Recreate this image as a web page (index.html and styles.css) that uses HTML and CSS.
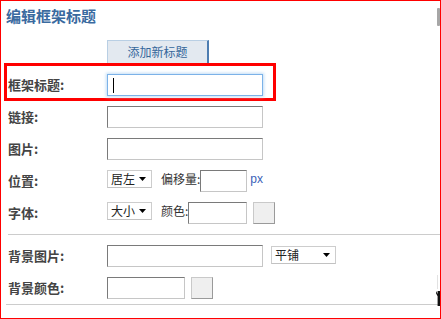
FILE: index.html
```html
<!DOCTYPE html>
<html lang="zh-CN">
<head>
<meta charset="utf-8">
<title>编辑框架标题</title>
<link rel="stylesheet" href="styles.css">
</head>
<body>
<div class="panel">
  <h1 class="title">编辑框架标题</h1>
  <div class="tabs"><div class="tab">添加新标题</div></div>

  <div class="row highlight">
    <div class="label">框架标题:</div>
    <div class="input focus w156"><span class="caret"></span></div>
  </div>

  <div class="rows">
    <div class="row">
      <div class="label">链接:</div>
      <div class="input w156"></div>
    </div>
    <div class="row">
      <div class="label">图片:</div>
      <div class="input w156"></div>
    </div>
    <div class="row">
      <div class="label">位置:</div>
      <div class="select w45"><span class="sel-text">居左</span><svg class="arrow" width="7" height="4" viewBox="0 0 7 4"><path d="M0 0H7L3.5 4Z" fill="#000"/></svg></div>
      <span class="text ml9">偏移量:</span>
      <div class="input w47"></div>
      <span class="unit">px</span>
    </div>
    <div class="row">
      <div class="label">字体:</div>
      <div class="select w45"><span class="sel-text">大小</span><svg class="arrow" width="7" height="4" viewBox="0 0 7 4"><path d="M0 0H7L3.5 4Z" fill="#000"/></svg></div>
      <span class="text ml9">颜色:</span>
      <div class="input w59"></div>
      <div class="swatch"></div>
    </div>
  </div>

  <div class="sep sep1"></div>

  <div class="rows rows2">
    <div class="row">
      <div class="label">背景图片:</div>
      <div class="input w156"></div>
      <div class="select w65 ml8 mt1"><span class="sel-text">平铺</span><svg class="arrow" width="7" height="4" viewBox="0 0 7 4"><path d="M0 0H7L3.5 4Z" fill="#000"/></svg></div>
    </div>
    <div class="row short">
      <div class="label">背景颜色:</div>
      <div class="input w78"></div>
      <div class="swatch"></div>
    </div>
  </div>

  <div class="sep sep2"></div>

  <div class="scroll-thumb"></div>
  <div class="scroll-line"></div>
  <div class="corner-mark"></div>
</div>
</body>
</html>
```

FILE: styles.css
```css
* { box-sizing: border-box; }
html, body { margin: 0; padding: 0; background: #fff; }
body {
  font-family: "Noto Sans CJK SC", "Noto Sans", sans-serif;
  font-size: 12px;
  color: #333;
}
.panel {
  position: relative;
  width: 441px;
  height: 319px;
  border: 1px solid #ff0000;
  overflow: hidden;
}
.title {
  margin: 5px 0 0 5px;
  height: 20px;
  line-height: 20px;
  font-size: 15px;
  font-weight: bold;
  color: #3a6a9f;
}
.tabs {
  margin-top: 14px;
  padding-left: 106px;
  height: 23px;
}
.tab {
  width: 102px;
  height: 23px;
  background: #e3e9f0;
  border-top: 1px solid #b9cfe4;
  border-left: 1px solid #b9cfe4;
  border-right: 2px solid #4d7db1;
  text-align: center;
  line-height: 21px;
  font-size: 12px;
  color: #35679b;
}
.row {
  display: flex;
  align-items: flex-start;
  height: 32px;
  padding-left: 7px;
}
.row.short { height: 27px; }
.highlight {
  width: 272px;
  height: 38px;
  margin-left: 3px;
  border: 3px solid #ff0000;
  padding: 8px 0 0 1px;
}
.rows { margin-top: 5px; }
.rows2 { margin-top: 10px; }
.label {
  width: 99px;
  flex: none;
  line-height: 22px;
  font-size: 13px;
  font-weight: bold;
  color: #444;
}
.input {
  flex: none;
  height: 22px;
  background: #fff;
  border: 1px solid;
  border-color: #7a7a7a #c6c6c6 #c6c6c6 #7a7a7a;
}
.input.focus {
  border: 1px solid #7cb2e8;
  box-shadow: 0 0 3px 1px #c2def6;
  padding: 3px 0 0 5px;
}
.caret {
  display: block;
  width: 1px;
  height: 15px;
  background: #000;
}
.w156 { width: 156px; }
.w47 { width: 47px; }
.w59 { width: 59px; }
.w78 { width: 78px; }
.w45 { width: 45px; }
.w65 { width: 65px; }
.ml9 { margin-left: 9px; }
.ml8 { margin-left: 8px; }
.mt1 { margin-top: 1px; }
.select {
  flex: none;
  display: flex;
  align-items: center;
  justify-content: space-between;
  height: 18px;
  padding: 0 5px 0 3px;
  border: 1px solid #cdcdcd;
  border-bottom-color: #c2c2c2;
  background: #fff;
  font-size: 12px;
  color: #222;
  line-height: 16px;
}
.arrow { display: block; flex: none; }
.text {
  flex: none;
  line-height: 17px;
  font-size: 12px;
  color: #333;
}
.unit {
  margin-left: 3px;
  font-family: "Liberation Sans", Arial, sans-serif;
  font-size: 12px;
  line-height: 18px;
  color: #3a62b8;
}
.swatch {
  flex: none;
  width: 22px;
  height: 22px;
  margin-left: 6px;
  background: #efefef;
  border: 1px solid;
  border-color: #c9c9c9 #9a9a9a #9a9a9a #c9c9c9;
}
.sep {
  height: 1px;
  background: #cccccc;
}
.sep1 { margin-left: 7px; }
.sep2 { margin-left: 5px; }
.scroll-thumb {
  position: absolute;
  left: 436px;
  top: 7px;
  width: 3px;
  height: 18px;
  background: #a6a6a6;
  border-radius: 1px;
}
.scroll-line {
  position: absolute;
  left: 436px;
  top: 274px;
  width: 1px;
  height: 14px;
  background: #e2e2e2;
}
.corner-mark {
  position: absolute;
  left: 435px;
  top: 290px;
  width: 4px;
  height: 15px;
  background: #111;
  clip-path: polygon(0 0, 40% 20%, 40% 0, 100% 0, 100% 100%, 40% 100%, 40% 35%, 0 15%);
}
```
